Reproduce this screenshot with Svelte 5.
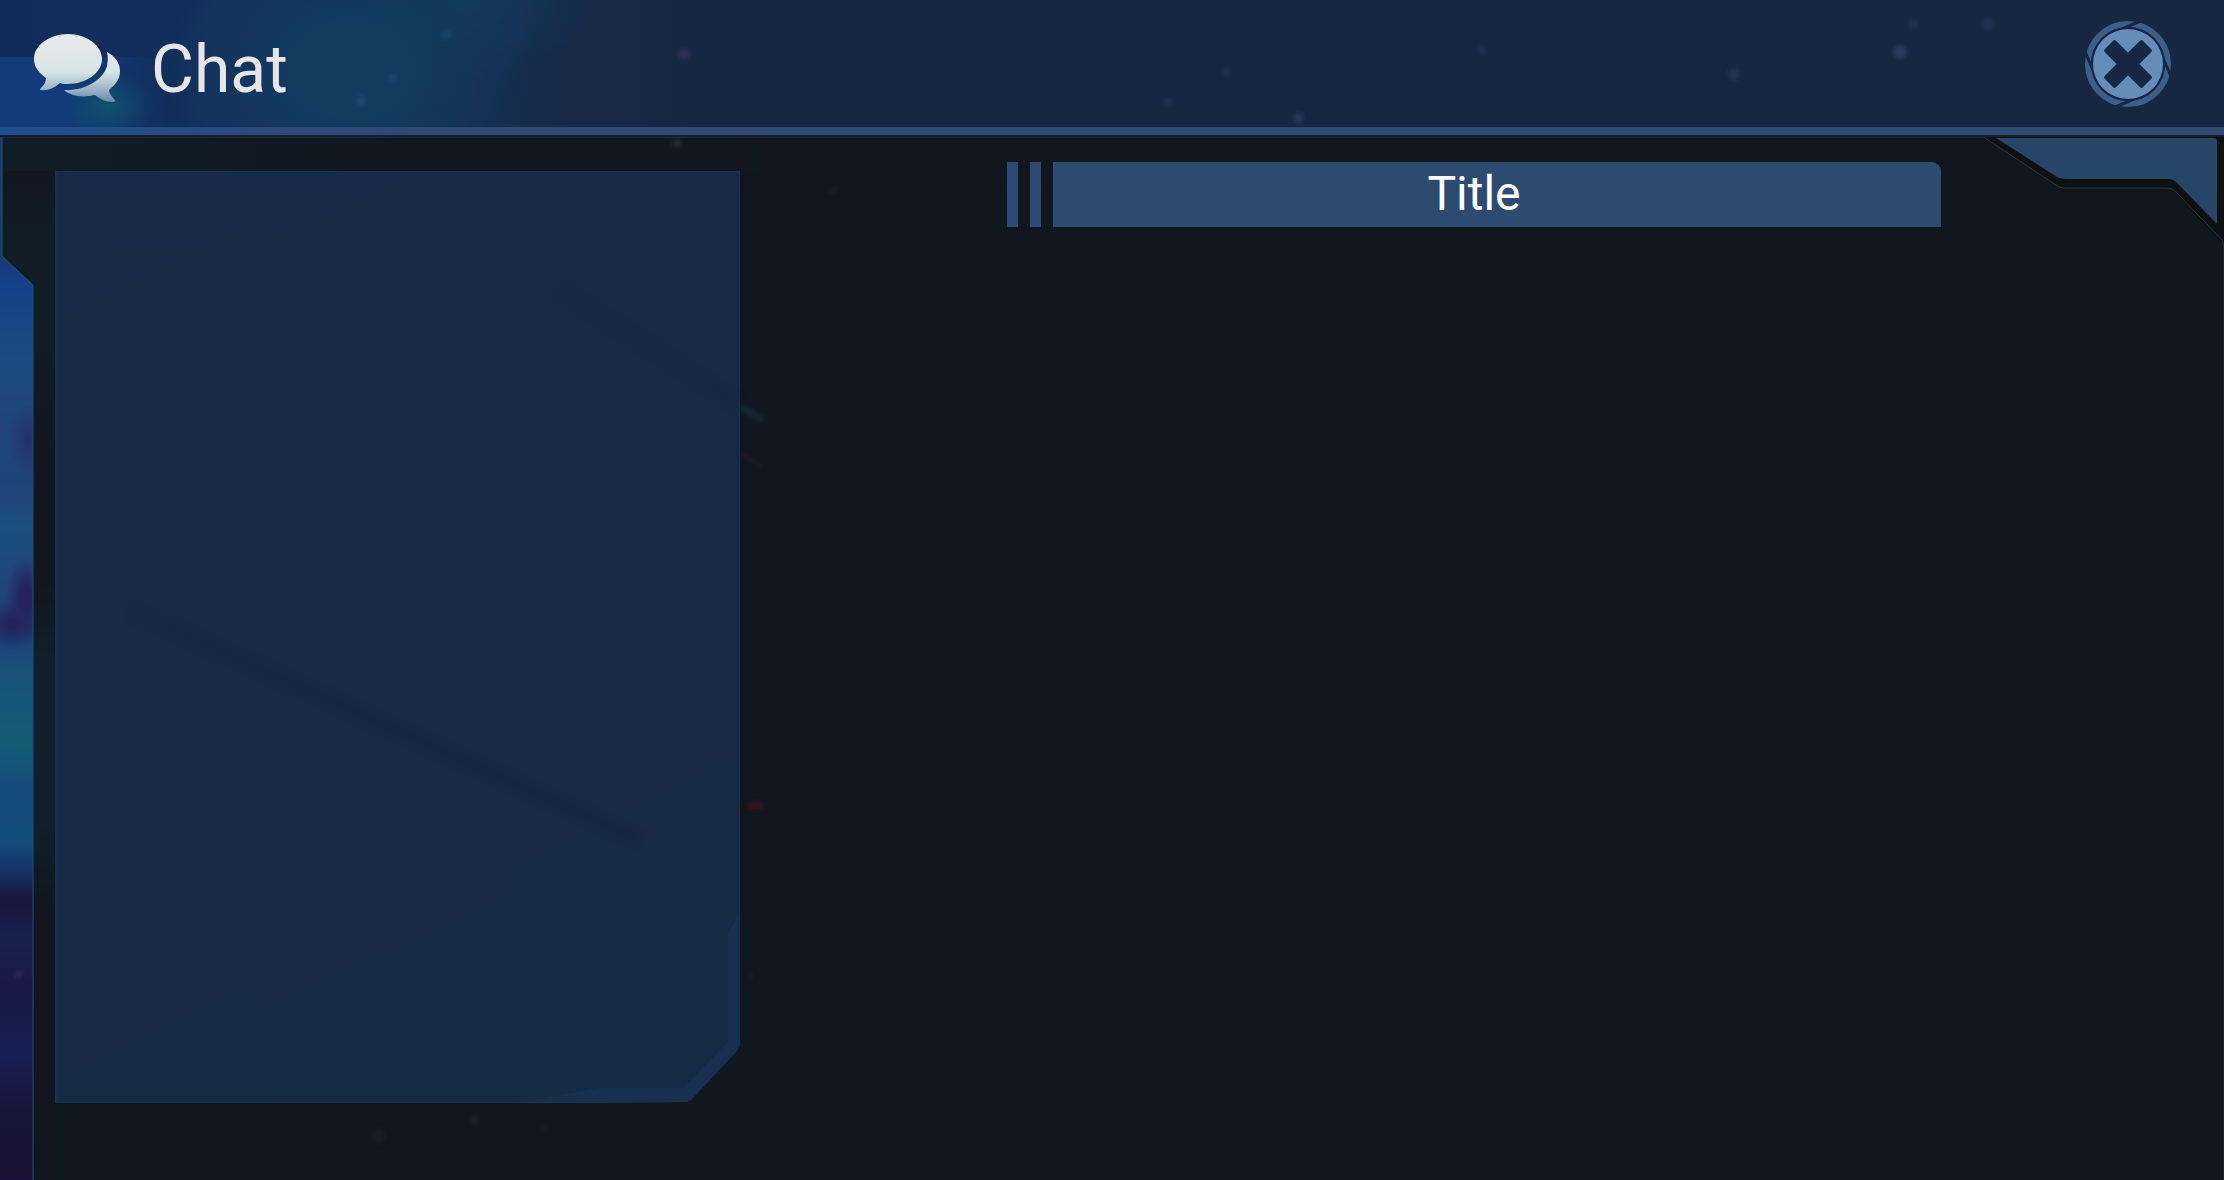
<script>
  let open = $state(true);
  const cuts = [0, 90, 180, 270];
  const stars = [
    [684, 54, 6, '#6a3a8a'], [1900, 52, 7, '#5a6ea0'], [1298, 118, 5, '#5a7096'],
    [1734, 74, 6, '#4a6088'], [1914, 24, 5, '#3f5680'], [1988, 24, 6, '#34507c'],
    [1168, 102, 4, '#4a5a94'], [361, 101, 5, '#3f7396'], [393, 77, 4, '#2f6590'],
    [446, 35, 5, '#2a5a86'], [677, 143, 5, '#5a5560'], [833, 190, 4, '#3a2a34'],
    [474, 1120, 5, '#3d3540'], [378, 1136, 8, '#2f2a33'], [544, 1129, 4, '#302c38'],
    [750, 976, 3, '#3a2f3c'], [1482, 50, 4, '#344c76'], [1226, 72, 4, '#344c76'],
    [19, 974, 4, '#5a4a8a']
  ];
</script>

<div class="screen">
  <svg class="stars" aria-hidden="true">
    {#each stars as [x, y, r, fill]}
      <circle cx={x} cy={y} {r} {fill} opacity="0.28" />
    {/each}
    <path d="M741 407L763 420" stroke="#142a34" stroke-width="7" />
    <path d="M741 453L762 468" stroke="#241c26" stroke-width="3" />
    <path d="M748 806H763" stroke="#3a1519" stroke-width="7" />
    <path d="M130 610L640 840M560 290L740 405" stroke="#14253c" stroke-width="18" opacity="0.15" />
  </svg>

  <header>
    <svg class="bubbles" viewBox="0 0 88 70" aria-hidden="true">
      <defs>
        <linearGradient id="shine" gradientUnits="userSpaceOnUse" x1="0" y1="0" x2="0" y2="70">
          <stop offset="0" stop-color="#e9e9ea" />
          <stop offset="0.55" stop-color="#d8e6e6" />
          <stop offset="0.75" stop-color="#a9c0cf" />
          <stop offset="1" stop-color="#6587ae" />
        </linearGradient>
      </defs>
      <g fill="url(#shine)">
        <path d="M35 1C53 1 69 12 69 26S53 51 35 51C32 51 29 51 27 50C21 55 15 58 8 57C6 57 7 56 8 55C11 52 13 49 13 45C6 40 1 34 1 26C1 12 17 1 35 1Z" />
        <path d="M74 19C82 23 87 30 87 38C87 46 83 51 76 57C76 60 78 63 81 66C83 68 82 69 79 69C73 69 67 66 62 62C50 65 37 63 31 57C52 58 70 47 74 33C75 28 75 23 74 19Z" />
      </g>
    </svg>
    <h1>Chat</h1>
    <button type="button" aria-label="Close" aria-expanded={open} onclick={() => (open = !open)}>
      <svg viewBox="-44 -44 88 88" aria-hidden="true">
        <circle r="40" fill="none" stroke="#3d5f88" stroke-width="6" />
        {#each cuts as turn}
          <path d="M-6 -35L17 -45" stroke="#162743" stroke-width="3" transform="rotate({turn})" />
        {/each}
        <circle r="37" fill="#162743" />
        <circle r="35" fill="#648dbb" />
        <g fill="#162743">
          <rect x="-27" y="-8" width="54" height="16" rx="2" transform="rotate(45)" />
          <rect x="-27" y="-8" width="54" height="16" rx="2" transform="rotate(-45)" />
        </g>
      </svg>
    </button>
  </header>

  <main>
    <svg class="edge" aria-hidden="true">
      <path d="M2 0V119L33 148V4000" />
    </svg>
    <svg class="corner" viewBox="0 0 240 108" aria-hidden="true">
      <path d="M0 -1H240V108L192 57Q188 51 182 51H80Q76 51 72 48Z" fill="#0e1012" />
      <path d="M1 1L72 48Q76 51 80 51H182Q188 51 192 55L239 104V108" fill="none" stroke="#263744" stroke-width="1" />
      <path d="M12 1H230Q233 1 233 4V87L194 47Q190 42 184 42H82Q77 42 73 40Z" fill="#264567" />
    </svg>

    <aside>
      <svg class="bevel" viewBox="0 0 230 190" aria-hidden="true">
        <path d="M230 0L218 20V129L173 175H87L30 186L0 190H230Z" />
      </svg>
    </aside>

    <section>
      <i></i>
      <i></i>
      <h2>Title</h2>
    </section>
  </main>
</div>

<style>
  :global(body) {
    margin: 0;
    background: #10171f;
  }

  .screen {
    position: relative;
    display: grid;
    grid-template-rows: auto 1fr;
    min-height: 100vh;
    overflow: hidden;
    background: #10171f;
    font-family: Roboto, "Liberation Sans", sans-serif;
  }

  .stars {
    position: absolute;
    inset: 0;
    z-index: 2;
    width: 100%;
    height: 100%;
    filter: blur(2px);
    pointer-events: none;
  }

  header {
    display: flex;
    align-items: center;
    box-sizing: border-box;
    height: 137px;
    padding: 0 52px 0 33px;
    border-bottom: 2px solid #151d28;
    background:
      linear-gradient(90deg, #214c8c, #234c88 120px, #29497a 240px, #2d4a73 420px) 0 100% / 100% 8px no-repeat,
      radial-gradient(ellipse 46px 36px at 108px 106px, #125070, transparent),
      linear-gradient(90deg, #123b7c, #123b7c 60px, transparent 170px) 0 57px / 200px 80px no-repeat,
      radial-gradient(ellipse 190px 150px at 350px 70px, #143a60 30%, transparent),
      radial-gradient(ellipse 120px 80px at 470px 0, #143a5e, transparent),
      linear-gradient(90deg, #112c59, #12305b 340px, #162b4a 520px, #162743 700px);
  }

  .bubbles {
    width: 88px;
    height: 70px;
  }

  h1 {
    flex: 1;
    margin: 4px 0 0 30px;
    color: #e6e6e8;
    font-size: 66px;
    font-weight: 400;
    line-height: 80px;
  }

  button {
    width: 88px;
    height: 88px;
    margin-bottom: 8px;
    padding: 0;
    border: 0;
    border-radius: 50%;
    background: none;
    cursor: pointer;
  }

  button svg {
    display: block;
    width: 100%;
    height: 100%;
  }

  main {
    position: relative;
    display: grid;
    grid-template-columns: 685fr 1484fr;
    padding: 34px 0 77px 55px;
    background:
      linear-gradient(#1c2835, #1c2835) 100% 108px / 1px 100% no-repeat,
      linear-gradient(90deg, #111d26 34px, #10171f 400px) 0 0 / 760px 34px no-repeat,
      linear-gradient(#13151f, #111d25 10%, #111c25 20%, #12161f 30%, #12161f 43%, #101f29 50%, #101f29 66%, #12151e 75%, #12151d) 0 0 / 56px 100% no-repeat,
      linear-gradient(#12151d, #10171f) 100% 0 / 100% 100px no-repeat,
      #10171f;
    box-shadow: inset 0 1px #1c2835;
  }

  .edge {
    position: absolute;
    top: 0;
    left: 0;
    width: 40px;
    height: 100%;
  }

  .edge path {
    fill: none;
    stroke: #274c70;
    stroke-width: 1;
  }

  main::before {
    content: "";
    position: absolute;
    top: 0;
    left: 0;
    width: 34px;
    height: 100%;
    clip-path: polygon(0 0, 2px 0, 2px 119px, 33px 148px, 33px 100%, 0 100%);
    background:
      radial-gradient(ellipse 20px 36px at 28px 302px, #25306b, transparent),
      radial-gradient(ellipse 20px 40px at 26px 460px, #25245d 30%, transparent),
      radial-gradient(ellipse 34px 26px at 12px 487px, #23255e 20%, transparent),
      linear-gradient(#1c3a70, #163a78 120px, #15418a 150px, #1b4c80 230px, #1f457a 283px, #20427a 343px, #1b4f7c 391px, #204478 455px, #1b4179 500px, #175277 535px, #125d76 607px, #154b7d 650px, #114f7b 703px, #173269 733px, #1a153b 762px, #17204f 800px, #181a44 850px, #161e54 920px, #181535 980px, #1a1238);
  }

  .corner {
    position: absolute;
    top: 0;
    right: 0;
    width: 240px;
    height: 108px;
  }

  aside {
    position: relative;
    clip-path: polygon(0 0, 100% 0, 100% calc(100% - 58px), calc(100% - 3px) calc(100% - 52px), calc(100% - 49px) calc(100% - 3px), calc(100% - 53px) calc(100% - 1px), calc(100% - 180px) 100%, 0 100%);
    box-shadow: inset 0 0 0 1px #17304f, inset 4px 0 #172d4c;
    background: linear-gradient(155deg, #162a47, #162a45 60%, #152a44);
  }

  .bevel {
    position: absolute;
    right: 0;
    bottom: 0;
    width: 230px;
    height: 190px;
  }

  .bevel path {
    fill: #182f50;
  }

  section {
    display: flex;
    align-items: stretch;
    gap: 12px;
    height: 65px;
    margin-top: -9px;
    padding: 0 283px 0 267px;
  }

  i {
    flex: none;
    width: 11px;
    background: #2d4a71;
  }

  h2 {
    flex: 1;
    margin: 0;
    padding-right: 46px;
    border-radius: 0 9px 0 0;
    background: #2d4a71;
    color: #fff;
    font-size: 48px;
    font-weight: 400;
    line-height: 64px;
    text-align: center;
  }
</style>
